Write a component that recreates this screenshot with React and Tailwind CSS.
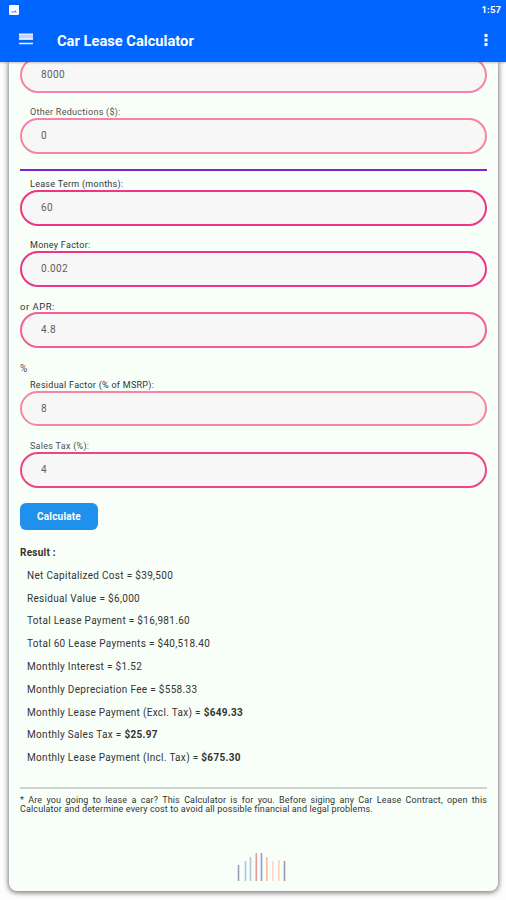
import React from "react";

function Field({ value, tone = "border-[#f5407f]" }) {
  return (
    <input
      readOnly
      value={value}
      className={`block h-[35.5px] w-full rounded-full border-2 bg-[#f7f7f7] px-[19px] text-[10px] tracking-[0.4px] text-[#606060] outline-none ${tone}`}
    />
  );
}

function Label({ children, height, inset = "pl-[10px]", color = "text-[#505050]", size = "text-[9px] tracking-[0.28px]" }) {
  return (
    <div className={`flex items-end ${inset} ${color} ${height} ${size}`}>
      <span className="h-[12px] leading-[13px] whitespace-nowrap">{children}</span>
    </div>
  );
}

const results = [
  ["Net Capitalized Cost = $39,500", ""],
  ["Residual Value = $6,000", ""],
  ["Total Lease Payment = $16,981.60", ""],
  ["Total 60 Lease Payments = $40,518.40", ""],
  ["Monthly Interest = $1.52", ""],
  ["Monthly Depreciation Fee = $558.33", ""],
  ["Monthly Lease Payment (Excl. Tax) = ", "$649.33"],
  ["Monthly Sales Tax = ", "$25.97"],
  ["Monthly Lease Payment (Incl. Tax) = ", "$675.30"],
];

const bars = [
  [238.5, 865, "#9a9fb5"],
  [245.5, 861, "#a9c8e8"],
  [250.5, 857, "#b3c5dc"],
  [256.3, 853, "#e29a9c"],
  [261.5, 853, "#8c9fd2"],
  [266.8, 857, "#f3bd98"],
  [272.8, 861, "#fad5cd"],
  [278.8, 860, "#f8d3b0"],
  [284.5, 861, "#969cae"],
];

export default function App() {
  return (
    <div className="flex h-[900px] w-[506px] flex-col overflow-hidden bg-[#fdfdfd] font-['Roboto',sans-serif] text-[10px] tracking-[0.25px] text-[#333]">
      <header className="z-10 h-[62px] shrink-0 bg-[#0066ff] text-white shadow-[0_1px_2px_rgba(0,0,0,0.25)]">
        <div className="flex h-[19px] items-center justify-between pr-[5px] pl-[9px]">
          <svg width="10" height="10" viewBox="0 0 10 10">
            <rect width="10" height="10" rx="1.3" fill="#fff" />
            <path d="M2 7.5L3.7 5.7L4.8 6.8L6.4 5L8 7.5Z" fill="#5b9bff" />
          </svg>
          <span className="text-[9.5px] leading-[19px] font-bold tracking-[0.1px]">1:57</span>
        </div>
        <div className="flex h-[43px] items-center pr-[18px] pl-[19px]">
          <svg width="14" height="12" viewBox="0 0 14 12" className="mb-[3px]">
            <rect y="1" width="14" height="5.5" fill="#c4d0ff" />
            <path d="M0 1.2H14M0 6H14M0 10.5H14" stroke="#f0f2ff" strokeWidth="1.3" />
          </svg>
          <h1 className="mt-[2px] ml-[24px] flex-1 text-[14.7px] leading-[43px] font-bold tracking-[0px]">Car Lease Calculator</h1>
          <svg width="4" height="12" viewBox="0 0 4 12" className="mb-[1px]">
            <path d="M.5 0h3v3h-3zM.5 4.5h3v3h-3zM.5 9h3v3h-3z" fill="#fff" />
          </svg>
        </div>
      </header>
      <main className="mx-[9px] h-[829px] w-[489px] shrink-0 rounded-b-[8px] bg-[#f8fff9] px-[11px] shadow-[0_1px_5px_1px_rgba(0,0,0,0.5)]">
        <div className="-mt-[5px]">
          <Field value="8000" tone="border-[#f783a5]" />
          <Label height="h-[25.5px]">Other Reductions ($):</Label>
          <Field value="0" tone="border-[#f783a5]" />
        </div>
        <hr className="mt-[15.5px] h-[2px] border-0 bg-[#8420d8]" />
        <Label height="h-[19px]" color="text-[#333]">Lease Term (months):</Label>
        <Field value="60" tone="border-[#ee3585]" />
        <Label height="h-[25.5px]" color="text-[#333]">Money Factor:</Label>
        <Field value="0.002" tone="border-[#ee3585]" />
        <Label height="h-[25.5px]" inset="pl-0" color="text-[#333]" size="text-[9.5px] tracking-[0.5px]">or APR:</Label>
        <Field value="4.8" tone="border-[#f55f94]" />
        <Label height="h-[26px]" inset="pl-0" size="text-[10px]">%</Label>
        <Label height="h-[17px]" color="text-[#333]">Residual Factor (% of MSRP):</Label>
        <Field value="8" tone="border-[#f783a5]" />
        <Label height="h-[26px]">Sales Tax (%):</Label>
        <Field value="4" tone="border-[#f04488]" />
        <button className="mt-[15px] block h-[27.5px] w-[78px] rounded-[6px] bg-[#1f90ec] text-[10px] font-bold tracking-[0.2px] text-white">
          Calculate
        </button>
        <h2 className="mt-[11px] h-[23.8px] leading-[23px] font-bold">Result :</h2>
        <ul className="pl-[7px] tracking-[0.31px]">
          {results.map(([text, bold]) => (
            <li key={text} className="h-[22.8px] leading-[22.8px] whitespace-pre">
              {text}
              <b>{bold}</b>
            </li>
          ))}
        </ul>
        <hr className="mt-[17.2px] h-[2px] border-0 bg-[#cfd3cf]" />
        <p className="mt-[7px] text-justify text-[9px] leading-[9.3px] tracking-[0.12px]">
          * Are you going to lease a car? This Calculator is for you. Before siging any Car Lease Contract, open this
          Calculator and determine every cost to avoid all possible financial and legal problems.
        </p>
        <svg className="mt-[37.4px] ml-[215px]" width="54" height="30" viewBox="235 852 54 30">
          {bars.map(([x, y, color]) => (
            <path key={x} d={`M${x} ${y}V881`} stroke={color} strokeWidth="1.6" />
          ))}
        </svg>
      </main>
    </div>
  );
}
